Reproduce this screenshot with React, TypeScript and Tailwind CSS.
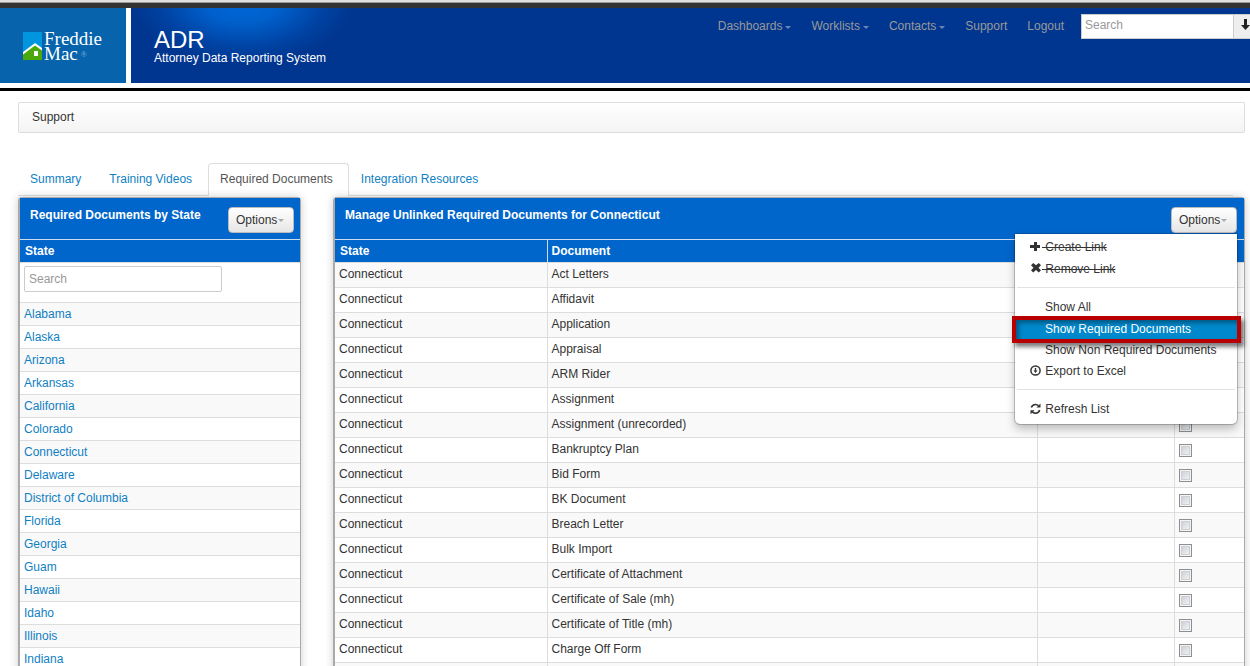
import React, { useState } from 'react';
import clsx from 'clsx';

const NAV = [
  { label: 'Dashboards', menu: true },
  { label: 'Worklists', menu: true },
  { label: 'Contacts', menu: true },
  { label: 'Support', menu: false },
  { label: 'Logout', menu: false },
];

const TABS = ['Summary', 'Training Videos', 'Required Documents', 'Integration Resources'];

const STATES = [
  'Alabama', 'Alaska', 'Arizona', 'Arkansas', 'California', 'Colorado', 'Connecticut', 'Delaware',
  'District of Columbia', 'Florida', 'Georgia', 'Guam', 'Hawaii', 'Idaho', 'Illinois', 'Indiana',
];

const DOCUMENTS = [
  'Act Letters', 'Affidavit', 'Application', 'Appraisal', 'ARM Rider', 'Assignment',
  'Assignment (unrecorded)', 'Bankruptcy Plan', 'Bid Form', 'BK Document', 'Breach Letter',
  'Bulk Import', 'Certificate of Attachment', 'Certificate of Sale (mh)',
  'Certificate of Title (mh)', 'Charge Off Form',
];

function Caret({ className }: { className?: string }) {
  return (
    <svg viewBox="0 0 6 3" className={clsx('h-[3px] w-[6px]', className)} fill="currentColor" aria-hidden="true">
      <path d="M0 0h6L3 3z" />
    </svg>
  );
}

function PlusIcon() {
  return (
    <svg viewBox="0 0 12 12" className="h-3 w-3 shrink-0" fill="#333" aria-hidden="true">
      <path d="M4 1h3v3h3v3H7v3H4V7H0V4h4z" />
    </svg>
  );
}

function RemoveIcon() {
  return (
    <svg viewBox="0 0 12 12" className="h-3 w-3 shrink-0" fill="#333" aria-hidden="true">
      <path d="M3.200 0 6 2.300 8.800 0 11 2.200 8.500 4.700 11 7.300 8.800 9.500 6 7.100 3.200 9.500 1 7.300l2.500-2.600L1 2.200z" />
    </svg>
  );
}

function DownloadIcon() {
  return (
    <svg viewBox="0 0 12 12" className="h-3 w-3 shrink-0" fill="none" aria-hidden="true">
      <circle cx="5.500" cy="5.500" r="4.600" stroke="#333" strokeWidth="1.500" />
      <path d="M4.800 3h1.400v2.500h1.300l-2 2.600-2-2.600h1.300z" fill="#333" />
    </svg>
  );
}

function RefreshIcon() {
  return (
    <svg viewBox="0 0 12 12" className="h-3 w-3 shrink-0" fill="none" aria-hidden="true">
      <path d="M1.300 4.600C2 2.500 3.600 1.500 5.400 1.500c1.300 0 2.400.500 3.200 1.300M9.700 7C9 9.100 7.400 10.200 5.600 10.200c-1.300 0-2.400-.500-3.200-1.300" stroke="#333" strokeWidth="1.600" />
      <path d="M10.500.4v4H6.500zM.500 11.200v-4h4z" fill="#333" />
    </svg>
  );
}

function Logo() {
  return (
    <a href="#" className="flex w-[126px] items-center bg-[#0663ac] pl-[23px] text-white">
      <svg viewBox="0 0 19 28" className="mr-[2px] h-7 w-[19px] shrink-0" aria-hidden="true">
        <path d="M0 0h19v28H0z" fill="#0095df" />
        <path d="M0 21 12 12.500l7 5V28H0z" fill="#4ca80f" />
        <path d="M0 20 12 11l7 5v2.500L12 13.500 0 22.500z" fill="#fff" />
        <path d="M11 19h4v5h-4z" fill="#fff" />
      </svg>
      <span className="font-['Liberation_Serif',serif] text-[19px] leading-[15px]">
        Freddie
        <br />
        Mac
        <span className="ml-[3px] align-middle text-[8px] leading-none text-[#7db3dc]">®</span>
      </span>
    </a>
  );
}

function Header() {
  return (
    <header>
      <div className="h-2 border-t-2 border-[#e0e0e0] bg-[#333]">
        <div className="h-px bg-[#999]" />
      </div>
      <div className="flex h-[75px] gap-[5px]">
        <Logo />
        <div className="flex flex-1 items-start justify-between bg-[#003690] bg-[radial-gradient(ellipse_110px_64px_at_112px_-8px,#0068d8_0%,#0060cc_35%,#0042a2_75%,#003690_100%)]">
          <div className="pt-5 pl-[23px] text-white">
            <h1 className="text-[24px] leading-6">ADR</h1>
            <p className="leading-3">Attorney Data Reporting System</p>
          </div>
          <nav className="flex items-start pt-[6px] text-[#999]">
            <ul className="mt-[3px] mr-[17px] flex gap-5">
              {NAV.map((item) => (
                <li key={item.label}>
                  <a href="#" className="flex items-center gap-[3px]">
                    {item.label}
                    {item.menu && <Caret className="mt-[2px] text-[#6a86b5]" />}
                  </a>
                </li>
              ))}
            </ul>
            <input
              type="text"
              aria-label="Search"
              placeholder="Search"
              className="h-[25px] w-[153px] border border-[#ccc] bg-white px-[3px] pb-[3px] placeholder:text-[#999]"
            />
            <button type="button" aria-label="Go" className="flex h-[25px] w-4 overflow-hidden border-y border-[#ccc] bg-[#eee] pt-1 pl-[7px]">
              <svg viewBox="0 0 9 12" className="h-3 w-[9px] shrink-0" fill="#222" aria-hidden="true">
                <path d="M3 0h3v6h3L4.500 11 0 6h3z" />
              </svg>
            </button>
          </nav>
        </div>
      </div>
      <div className="mt-[5px] h-[3px] bg-black" />
    </header>
  );
}

function Tabs() {
  return (
    <ul className="mr-3 flex border-b border-[#ddd]">
      {TABS.map((tab) => (
        <li key={tab}>
          <a
            href="#"
            className={clsx(
              '-mb-px flex h-[33px] items-center border pr-[15px] pb-[2px] pl-[11px]',
              tab === 'Required Documents'
                ? 'rounded-t border-[#ddd] border-b-white bg-white text-[#555]'
                : 'border-transparent text-[#0f7fc4]',
            )}
          >
            {tab}
          </a>
        </li>
      ))}
    </ul>
  );
}

function OptionsButton(props: React.ComponentProps<'button'>) {
  return (
    <button
      type="button"
      className="flex h-[26px] w-[66px] items-center gap-px rounded border border-[#bbb] bg-linear-to-b from-white to-[#e6e6e6] pl-[7px]"
      {...props}
    >
      Options
      <Caret className="text-[#aaa]" />
    </button>
  );
}

function OptionsMenu() {
  const item = 'flex w-full items-center pl-[15px]';
  const divider = 'mx-[2px] mt-[7px] mb-2 h-px bg-[#e2e2e2]';
  return (
    <ul className="w-[222px] rounded-b-[5px] bg-white pt-[2px] pb-1 shadow-[0_0_0_1px_rgba(0,0,0,0.2),0_5px_10px_rgba(0,0,0,0.25)]">
      <li>
        <button type="button" className={clsx(item, 'h-[22px]')}>
          <PlusIcon />
          <span className="whitespace-pre line-through"> Create Link</span>
        </button>
      </li>
      <li>
        <button type="button" className={clsx(item, 'h-[22px]')}>
          <RemoveIcon />
          <span className="whitespace-pre line-through"> Remove Link</span>
        </button>
      </li>
      <li className={divider} />
      <li>
        <button type="button" className="flex h-[22px] w-full items-center pl-[30px]">Show All</button>
      </li>
      <li className="relative">
        <button type="button" className="flex h-[22px] w-full items-center bg-[#0088cc] pl-[30px] text-white">
          Show Required Documents
        </button>
        <span className="pointer-events-none absolute -top-[2px] -right-1 -bottom-[3px] -left-[3px] border-4 border-[#b80000] shadow-[3px_4px_4px_rgba(0,0,0,0.5),inset_3px_3px_4px_rgba(0,0,0,0.35)]" />
      </li>
      <li>
        <button type="button" className="flex h-[21px] w-full items-center pb-[2px] pl-[30px]">Show Non Required Documents</button>
      </li>
      <li>
        <button type="button" className={clsx(item, 'h-[21px] pb-[2px]')}>
          <DownloadIcon />
          <span className="whitespace-pre"> Export to Excel</span>
        </button>
      </li>
      <li className={divider} />
      <li>
        <button type="button" className={clsx(item, 'h-[22px]')}>
          <RefreshIcon />
          <span className="whitespace-pre"> Refresh List</span>
        </button>
      </li>
    </ul>
  );
}

const panel = 'rounded-t border border-l-2 border-[#aaa] bg-white shadow-[0_0_8px_rgba(0,0,0,0.2)]';
const panelHead = 'flex h-[41px] items-start justify-between bg-[#0066cc] pl-[10px] font-bold text-white';

function StatePanel() {
  return (
    <section className={clsx(panel, 'w-[283px] shrink-0')}>
      <div className={clsx(panelHead, 'pr-[6px]')}>
        <h2 className="pt-2">Required Documents by State</h2>
        <div className="pt-[9px] font-normal text-[#333]">
          <OptionsButton />
        </div>
      </div>
      <table className="w-full border-collapse">
        <thead>
          <tr>
            <th className="h-[23px] border-t border-[#cde] bg-[#0066cc] px-[5px] text-left text-white">State</th>
          </tr>
        </thead>
        <tbody>
          <tr>
            <td className="h-10 border-t border-[#ddd] px-1 pt-[3px] align-top">
              <input
                type="text"
                aria-label="Search states"
                placeholder="Search"
                className="block h-[26px] w-[198px] rounded-xs border border-[#ccc] px-1 placeholder:text-[#999]"
              />
            </td>
          </tr>
          {STATES.map((state) => (
            <tr key={state} className="odd:bg-white even:bg-[#f9f9f9]">
              <td className="h-[23px] border-t border-[#ddd] px-1">
                <a href="#" className="text-[#0f7fc4]">{state}</a>
              </td>
            </tr>
          ))}
        </tbody>
      </table>
    </section>
  );
}

function DocumentsPanel() {
  const [open, setOpen] = useState(true);
  return (
    <section className={clsx(panel, 'flex-1')}>
      <div className={clsx(panelHead, 'pr-[7px]')}>
        <h2 className="pt-2">Manage Unlinked Required Documents for Connecticut</h2>
        <div className="relative pt-[9px] font-normal text-[#333]">
          <OptionsButton aria-expanded={open} onClick={() => setOpen(!open)} />
          {open && (
            <div className="absolute top-9 right-0 z-10">
              <OptionsMenu />
            </div>
          )}
        </div>
      </div>
      <table className="w-full table-fixed border-collapse">
        <colgroup>
          <col className="w-[212px]" />
          <col />
          <col className="w-[137px]" />
          <col className="w-[70px]" />
        </colgroup>
        <thead>
          <tr className="h-[23px] border-t border-[#cde] bg-[#0066cc] text-left text-white">
            <th className="px-[5px]">State</th>
            <th className="border-l border-[#cde] px-1">Document</th>
            <th className="border-l border-[#cde]" />
            <th className="border-l border-[#cde]" />
          </tr>
        </thead>
        <tbody>
          {DOCUMENTS.map((doc) => (
            <tr key={doc} className="h-[25px] border-t border-[#ddd] odd:bg-[#f9f9f9]">
              <td className="px-1 pb-[2px]">Connecticut</td>
              <td className="border-l border-[#ddd] px-1 pb-[2px]">{doc}</td>
              <td className="border-l border-[#ddd]" />
              <td className="border-l border-[#ddd] px-1">
                <input
                  type="checkbox"
                  aria-label={`Select ${doc}`}
                  className="block h-[13px] w-[13px] appearance-none border border-[#8e8f8f] bg-linear-to-br from-[#c4c9d2] to-[#fafafa] shadow-[inset_0_0_0_1px_#f4f4f4,inset_0_0_0_2px_#cdd0d5] checked:bg-[#4b5f83]"
                />
              </td>
            </tr>
          ))}
          <tr className="h-[25px] border-t border-[#ddd] bg-[#f9f9f9]">
            <td />
            <td className="border-l border-[#ddd]" />
            <td className="border-l border-[#ddd]" />
            <td className="border-l border-[#ddd]" />
          </tr>
        </tbody>
      </table>
    </section>
  );
}

export default function App() {
  return (
    <div className="h-screen overflow-hidden bg-white font-['Liberation_Sans',Arial,sans-serif] text-[12px] leading-[18px] text-[#333]">
      <Header />
      <main className="pt-[11px] pr-[5px] pl-[18px]">
        <div className="mb-[30px] rounded-xs border border-[#ddd] bg-linear-to-b from-white to-[#f4f4f4] px-[13px] pt-[5px] pb-[6px]">
          Support
        </div>
        <Tabs />
        <div className="mt-px flex gap-8">
          <StatePanel />
          <DocumentsPanel />
        </div>
      </main>
    </div>
  );
}
